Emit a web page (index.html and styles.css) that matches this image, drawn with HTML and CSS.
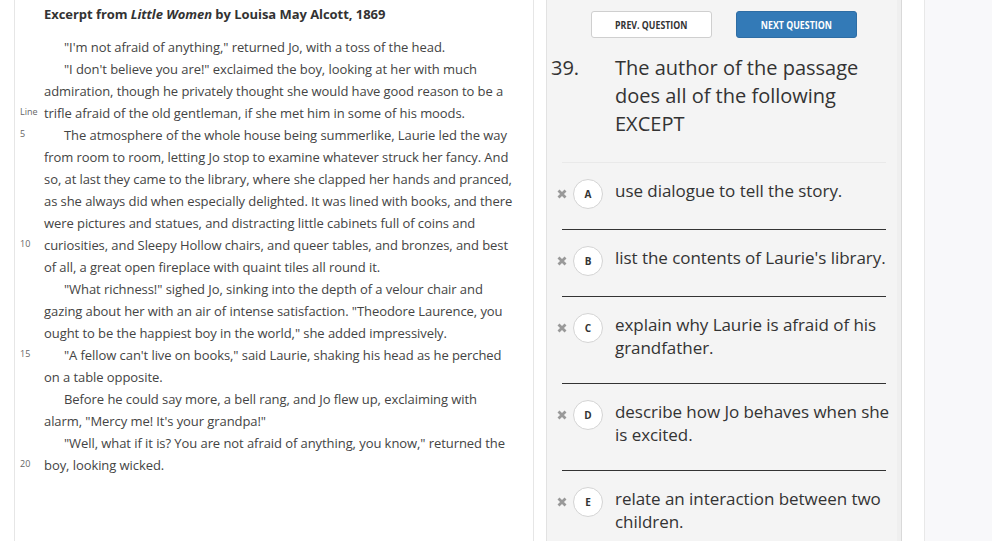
FILE: index.html
```html
<!DOCTYPE html>
<html lang="en">
<head>
<meta charset="utf-8">
<title>Little Women – Question 39</title>
<link rel="stylesheet" href="styles.css">
</head>
<body>
<div class="page">
  <section class="passage-panel">
    <h1 class="title">Excerpt from <em>Little Women</em> by Louisa May Alcott, 1869</h1>
    <div class="passage">
      <div class="nums">
        <span></span><span></span><span></span><span>Line</span><span>5</span>
        <span></span><span></span><span></span><span></span><span>10</span>
        <span></span><span></span><span></span><span></span><span>15</span>
        <span></span><span></span><span></span><span></span><span>20</span>
      </div>
      <div class="text">
        <p>"I'm not afraid of anything," returned Jo, with a toss of the head.</p>
        <p>"I don't believe you are!" exclaimed the boy, looking at her with much<br>admiration, though he privately thought she would have good reason to be a<br>trifle afraid of the old gentleman, if she met him in some of his moods.</p>
        <p>The atmosphere of the whole house being summerlike, Laurie led the way<br>from room to room, letting Jo stop to examine whatever struck her fancy. And<br>so, at last they came to the library, where she clapped her hands and pranced,<br>as she always did when especially delighted. It was lined with books, and there<br>were pictures and statues, and distracting little cabinets full of coins and<br>curiosities, and Sleepy Hollow chairs, and queer tables, and bronzes, and best<br>of all, a great open fireplace with quaint tiles all round it.</p>
        <p>"What richness!" sighed Jo, sinking into the depth of a velour chair and<br>gazing about her with an air of intense satisfaction. "Theodore Laurence, you<br>ought to be the happiest boy in the world," she added impressively.</p>
        <p>"A fellow can't live on books," said Laurie, shaking his head as he perched<br>on a table opposite.</p>
        <p>Before he could say more, a bell rang, and Jo flew up, exclaiming with<br>alarm, "Mercy me! It's your grandpa!"</p>
        <p>"Well, what if it is? You are not afraid of anything, you know," returned the<br>boy, looking wicked.</p>
      </div>
    </div>
  </section>

  <section class="question-panel">
    <div class="nav">
      <button class="btn btn-prev"><span>PREV. QUESTION</span></button>
      <button class="btn btn-next"><span>NEXT QUESTION</span></button>
    </div>
    <div class="question">
      <span class="qnum">39.</span>
      <span class="qtext">The author of the passage does all of the following EXCEPT</span>
    </div>
    <ul class="choices">
      <li class="choice">
        <svg class="cross" viewBox="0 0 10 10"><path d="M1.5 1.5 L8.5 8.5 M8.5 1.5 L1.5 8.5"/></svg>
        <span class="letter">A</span>
        <span class="ctext">use dialogue to tell the story.</span>
      </li>
      <li class="choice">
        <svg class="cross" viewBox="0 0 10 10"><path d="M1.5 1.5 L8.5 8.5 M8.5 1.5 L1.5 8.5"/></svg>
        <span class="letter">B</span>
        <span class="ctext">list the contents of Laurie's library.</span>
      </li>
      <li class="choice">
        <svg class="cross" viewBox="0 0 10 10"><path d="M1.5 1.5 L8.5 8.5 M8.5 1.5 L1.5 8.5"/></svg>
        <span class="letter">C</span>
        <span class="ctext">explain why Laurie is afraid of his<br>grandfather.</span>
      </li>
      <li class="choice">
        <svg class="cross" viewBox="0 0 10 10"><path d="M1.5 1.5 L8.5 8.5 M8.5 1.5 L1.5 8.5"/></svg>
        <span class="letter">D</span>
        <span class="ctext">describe how Jo behaves when she<br>is excited.</span>
      </li>
      <li class="choice">
        <svg class="cross" viewBox="0 0 10 10"><path d="M1.5 1.5 L8.5 8.5 M8.5 1.5 L1.5 8.5"/></svg>
        <span class="letter">E</span>
        <span class="ctext">relate an interaction between two<br>children.</span>
      </li>
    </ul>
  </section>

  <aside class="side-panel"></aside>
</div>
</body>
</html>
```

FILE: styles.css
```css
* { box-sizing: border-box; }

html, body {
  margin: 0;
  padding: 0;
  background: #fff;
  height: 100%;
  overflow: hidden;
}

body {
  font-family: "Open Sans", "Noto Sans", sans-serif;
  color: #333;
}

.page {
  display: flex;
  align-items: stretch;
  height: 541px;
  padding-left: 14px;
}

/* ---------- passage ---------- */
.passage-panel {
  width: 520px;
  flex: none;
  border-left: 1px solid #e6e6e6;
  border-right: 1px solid #e6e6e6;
  padding-left: 5px;
  background: #fff;
}

.title {
  margin: 0 0 0 24px;
  padding-top: 3px;
  font-size: 13px;
  line-height: 22px;
  font-weight: 700;
  color: #333;
  letter-spacing: -0.05px;
}

.title em {
  font-style: italic;
}

.passage {
  display: flex;
  margin-top: 11px;
}

.nums {
  width: 24px;
  flex: none;
  display: flex;
  flex-direction: column;
}

.nums span {
  display: block;
  height: 22px;
  line-height: 20px;
  font-size: 9px;
  color: #666;
}

.text {
  flex: 1;
  font-size: 13px;
  line-height: 22px;
  color: #444;
  white-space: nowrap;
  letter-spacing: -0.07px;
}

.text p {
  margin: 0;
  text-indent: 20px;
}

/* ---------- question ---------- */
.question-panel {
  width: 356px;
  flex: none;
  margin-left: 12px;
  background: #f4f4f4;
  border-left: 1px solid #e2e2e2;
  border-right: 1px solid #d9d9d9;
  box-shadow: inset -4px 0 0 #efefef;
}

.nav {
  display: flex;
  justify-content: center;
  gap: 24px;
  padding-top: 11px;
}

.btn {
  width: 121px;
  height: 27px;
  border-radius: 3px;
  font-family: "Open Sans", sans-serif;
  font-weight: 700;
  font-size: 11px;
  padding: 0;
  display: flex;
  align-items: center;
  justify-content: center;
  cursor: pointer;
}

.btn span {
  display: inline-block;
  transform: scaleX(0.8);
  white-space: nowrap;
}

.btn-prev {
  background: #fff;
  border: 1px solid #cfcfcf;
  color: #333;
}

.btn-next {
  background: #337ab7;
  border: 1px solid #2e6da4;
  color: #fff;
}

.question {
  display: flex;
  margin-top: 16px;
  padding-left: 4px;
  font-size: 20px;
  line-height: 28px;
  color: #333;
}

.qnum {
  width: 64px;
  flex: none;
}

.qtext {
  flex: 1;
  padding-right: 20px;
}

.choices {
  list-style: none;
  margin: 24px 15px 0;
  padding: 0;
  border-top: 1px solid #e9e9e9;
}

.choice {
  display: flex;
  align-items: flex-start;
  padding: 16px 0 20px;
  border-bottom: 1px solid #333;
}

.choice:last-child {
  border-bottom: none;
}

.cross {
  width: 10px;
  height: 10px;
  flex: none;
  margin: 10px 0 0 -5px;
  stroke: #999;
  stroke-width: 2.8;
  fill: none;
}

.letter {
  width: 30px;
  height: 30px;
  flex: none;
  margin-left: 6px;
  border-radius: 50%;
  border: 1px solid #d4d4d4;
  background: #fff;
  display: flex;
  align-items: center;
  justify-content: center;
  font-size: 10px;
  font-weight: 700;
  color: #333;
}

.ctext {
  flex: 1;
  margin-left: 12px;
  font-size: 17px;
  line-height: 23px;
  padding-bottom: 4px;
  color: #333;
  white-space: nowrap;
  letter-spacing: -0.05px;
}

/* ---------- side ---------- */
.side-panel {
  flex: 1;
  margin-left: 22px;
  background: #f8f8fa;
  border-left: 1px solid #e8e8e8;
}
```
